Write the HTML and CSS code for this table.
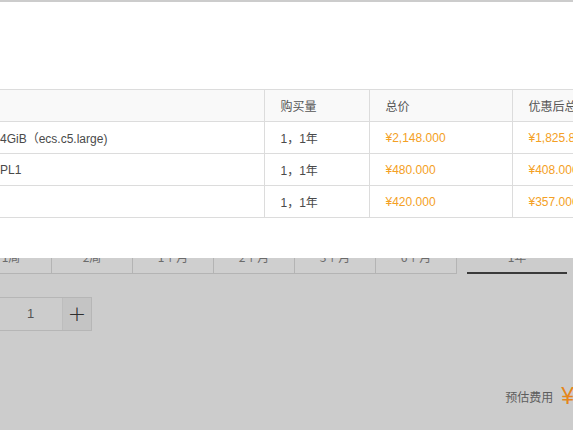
FILE: index.html
```html
<!DOCTYPE html>
<html>
<head>
<meta charset="utf-8">
<link rel="stylesheet" href="styles.css">
</head>
<body>
<div class="page">
  <div class="top-line">
    <span class="tl1">地域和可用区</span>
    <span class="tl2">付费模式</span>
    <span class="tl3">包年包月</span>
  </div>
  <div class="tabs">
    <div class="tab">1周</div>
    <div class="tab">2周</div>
    <div class="tab">1个月</div>
    <div class="tab">2个月</div>
    <div class="tab">3个月</div>
    <div class="tab">6个月</div>
    <div class="tab active">1年</div>
  </div>
  <div class="stepper">
    <div class="st-btn minus">−</div>
    <div class="st-input">1</div>
    <div class="st-btn plus">+</div>
  </div>
  <div class="estimate">
    <span class="est-label">预估费用</span>
    <span class="est-price">¥</span>
  </div>
</div>

<div class="modal">
  <table class="price-table">
    <colgroup>
      <col class="c1"><col class="c2"><col class="c3"><col class="c4">
    </colgroup>
    <thead>
      <tr><th class="first"></th><th>购买量</th><th>总价</th><th>优惠后总价</th></tr>
    </thead>
    <tbody>
      <tr><td class="first">4GiB（ecs.c5.large)</td><td>1，1年</td><td class="price">¥2,148.000</td><td class="price">¥1,825.800</td></tr>
      <tr><td class="first">PL1</td><td>1，1年</td><td class="price">¥480.000</td><td class="price">¥408.000</td></tr>
      <tr><td class="first"></td><td>1，1年</td><td class="price">¥420.000</td><td class="price">¥357.000</td></tr>
    </tbody>
  </table>
</div>
</body>
</html>
```
FILE: styles.css
```css
html, body {
  margin: 0;
  padding: 0;
}
body {
  width: 573px;
  height: 430px;
  overflow: hidden;
  position: relative;
  background: #cccccc;
  font-family: "Liberation Sans", Arial, "Noto Sans CJK SC", sans-serif;
  font-size: 12px;
}
.page {
  display: flex;
  flex-direction: column;
}
.top-line {
  height: 12px;
  margin-top: -11px;
  line-height: 12px;
  font-size: 12px;
  color: #8a8a8a;
  display: flex;
  white-space: nowrap;
}
.tl1 { margin-left: 24px; }
.tl2 { margin-left: 88px; }
.tl3 { margin-left: 40px; }

.tabs {
  display: flex;
  margin-top: 249px;
  margin-left: -29px;
  height: 24px;
}
.tab {
  width: 80px;
  border-right: 1px solid #b4b4b4;
  border-bottom: 1px solid #b4b4b4;
  background: #cfcfcf;
  color: #6b6b6b;
  text-align: center;
  padding-top: 1px;
  line-height: 12px;
  font-family: "Noto Sans CJK SC", sans-serif;
  font-size: 12px;
  height: 22px;
  overflow: hidden;
}
.tab.active {
  width: 100px;
  margin-left: 10px;
  background: transparent;
  border-right: none;
  border-bottom: 2px solid #3a3a3a;
  height: 21px;
}

.stepper {
  display: flex;
  margin-top: 23px;
  margin-left: -34px;
  width: fit-content;
  height: 32px;
  border: 1px solid #b6b6b6;
}
.st-btn {
  width: 28px;
  text-align: center;
  line-height: 31px;
  font-size: 22px;
  color: #2f2f2f;
  font-family: "DejaVu Sans", sans-serif;
  font-weight: 200;
}
.minus { width: 31px; border-right: 1px solid #b6b6b6; }
.plus { background: #c4c4c4; border-left: 1px solid #bdbdbd; }
.st-input {
  width: 63px;
  text-align: center;
  line-height: 32px;
  font-size: 13px;
  color: #555;
}

.estimate {
  display: flex;
  align-items: center;
  justify-content: flex-end;
  margin-top: 52px;
  margin-right: -1px;
  gap: 8px;
}
.est-label {
  font-family: "Noto Sans CJK SC", sans-serif;
  font-size: 12px;
  color: #5e5e5e;
}
.est-price {
  font-size: 23px;
  color: #e5861a;
  font-family: "Liberation Sans", sans-serif;
  line-height: 26px;
}

.modal {
  position: absolute;
  top: 2px;
  left: 0;
  width: 573px;
  height: 256px;
  background: #ffffff;
  overflow: hidden;
}
.price-table {
  margin-top: 87px;
  border-collapse: collapse;
  table-layout: fixed;
  width: 720px;
  color: #4a4a4a;
}
.c1 { width: 264px; }
.c2 { width: 105px; }
.c3 { width: 143px; }
.c4 { width: 208px; }
.price-table th,
.price-table td {
  height: 31px;
  padding: 0 0 0 16px;
  border: 1px solid #dcdcdc;
  text-align: left;
  font-weight: normal;
  white-space: nowrap;
  overflow: hidden;
}
.price-table th {
  background: #f9f9f9;
  font-family: "Noto Sans CJK SC", sans-serif;
  color: #555;
}
.price-table td {
  font-family: "Liberation Sans", Arial, "Noto Sans CJK SC", sans-serif;
}
.price-table .first {
  padding-left: 0;
  border-left: none;
}
.price-table td.price {
  color: #f4a024;
}
```
